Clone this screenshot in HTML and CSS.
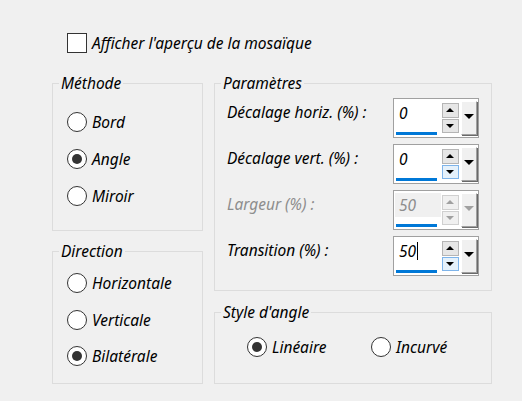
FILE: index.html
```html
<!DOCTYPE html>
<html lang="fr">
<head>
<meta charset="utf-8">
<title>Mosaïque</title>
<link rel="stylesheet" href="styles.css">
</head>
<body>
<div class="dialog">
  <div class="check-row"><span class="checkbox"></span><span>Afficher l'aperçu de la mosaïque</span></div>
  <div class="columns">
    <div class="col-left">
      <fieldset class="group methode">
        <legend>Méthode</legend>
        <div class="radio-list">
          <div class="radio"><span class="circle"></span>Bord</div>
          <div class="radio"><span class="circle checked"></span>Angle</div>
          <div class="radio"><span class="circle"></span>Miroir</div>
        </div>
      </fieldset>
      <fieldset class="group direction">
        <legend>Direction</legend>
        <div class="radio-list">
          <div class="radio"><span class="circle"></span>Horizontale</div>
          <div class="radio"><span class="circle"></span>Verticale</div>
          <div class="radio"><span class="circle checked"></span>Bilatérale</div>
        </div>
      </fieldset>
    </div>
    <div class="col-right">
      <fieldset class="group params">
        <legend>Paramètres</legend>
        <div class="param-list">
          <div class="param-row">
            <span class="plabel">Décalage horiz. (%) :</span>
            <div class="spin">
              <div class="field"><span class="val">0</span><span class="bar"></span></div>
              <div class="updown"><span class="ud up"></span><span class="ud down"></span></div>
              <span class="drop"></span>
            </div>
          </div>
          <div class="param-row">
            <span class="plabel">Décalage vert. (%) :</span>
            <div class="spin">
              <div class="field"><span class="val">0</span><span class="bar"></span></div>
              <div class="updown"><span class="ud up"></span><span class="ud down hot"></span></div>
              <span class="drop"></span>
            </div>
          </div>
          <div class="param-row disabled">
            <span class="plabel">Largeur (%) :</span>
            <div class="spin">
              <div class="field"><span class="val">50</span><span class="bar"></span></div>
              <div class="updown"><span class="ud up"></span><span class="ud down"></span></div>
              <span class="drop"></span>
            </div>
          </div>
          <div class="param-row">
            <span class="plabel">Transition (%) :</span>
            <div class="spin">
              <div class="field"><span class="val">50<span class="caret"></span></span><span class="bar"></span></div>
              <div class="updown"><span class="ud up"></span><span class="ud down hot"></span></div>
              <span class="drop"></span>
            </div>
          </div>
        </div>
      </fieldset>
      <fieldset class="group style">
        <legend>Style d'angle</legend>
        <div class="radio-row">
          <div class="radio first"><span class="circle checked"></span>Linéaire</div>
          <div class="radio"><span class="circle"></span>Incurvé</div>
        </div>
      </fieldset>
    </div>
  </div>
</div>
</body>
</html>
```

FILE: styles.css
```css
html, body {
  margin: 0;
  background: #f0f0f0;
}
body {
  font-family: "Noto Sans", "Open Sans", sans-serif;
  font-style: italic;
  font-size: 15.5px;
  color: #000;
}
.dialog {
  width: 522px;
  height: 401px;
  box-sizing: border-box;
  padding: 33px 0 0 52px;
}
.check-row {
  display: flex;
  align-items: center;
  gap: 5px;
  height: 20px;
  margin-left: 15px;
}
.checkbox {
  width: 20px;
  height: 20px;
  box-sizing: border-box;
  border: 1px solid #333;
  background: #fff;
}
.columns {
  display: flex;
  gap: 11px;
  margin-top: 20px;
}
.col-left {
  width: 151px;
  display: flex;
  flex-direction: column;
  gap: 10px;
}
.col-right {
  width: 278px;
  display: flex;
  flex-direction: column;
  gap: 11px;
}
.group {
  margin: 0;
  padding: 0;
  min-width: 0;
  border: 1px solid #dcdcdc;
}
.group legend {
  margin-left: 6px;
  padding: 0 2px;
  line-height: 20px;
}
.radio-list {
  display: flex;
  flex-direction: column;
}
.methode .radio-list {
  padding: 19px 0 24px 14px;
  gap: 17px;
}
.direction .radio-list {
  padding: 12px 0 17px 14px;
  gap: 16.5px;
}
.radio {
  display: flex;
  align-items: center;
  gap: 5px;
  height: 20px;
}
.circle {
  width: 20px;
  height: 20px;
  box-sizing: border-box;
  border-radius: 50%;
  border: 1px solid #333;
  background: #fff;
  display: flex;
  align-items: center;
  justify-content: center;
}
.circle.checked::after {
  content: "";
  width: 10px;
  height: 10px;
  border-radius: 50%;
  background: #333;
}
.param-list {
  display: flex;
  flex-direction: column;
  gap: 6px;
  padding: 5px 0 14px 12px;
}
.param-row {
  display: flex;
  align-items: flex-start;
}
.plabel {
  width: 166px;
  padding-top: 4px;
  line-height: 20px;
}
.disabled .plabel,
.disabled .val {
  color: #8d8d8d;
}
.spin {
  width: 86px;
  height: 40px;
  box-sizing: border-box;
  border: 1px solid #a0a0a0;
  background: #fff;
  display: flex;
  padding: 1px;
}
.field {
  width: 48px;
  display: flex;
  flex-direction: column;
  justify-content: flex-end;
}
.val {
  display: flex;
  align-items: center;
  height: 24px;
  padding-left: 4px;
  margin-bottom: 7px;
  line-height: 20px;
}
.disabled .val {
  background: #f0f0f0;
}
.caret {
  width: 1px;
  height: 18px;
  background: #000;
  margin-left: 1px;
}
.bar {
  width: 41px;
  height: 3px;
  margin-left: 1px;
  margin-bottom: 1px;
  background: #0078d7;
}
.updown {
  display: flex;
  flex-direction: column;
  width: 17px;
  margin: 3px 0 3px 1px;
}
.ud {
  flex: 1;
  box-sizing: border-box;
  border: 1px solid #b5b5b5;
  background: #e6e6e6;
  display: flex;
  align-items: center;
  justify-content: center;
}
.ud + .ud {
  margin-top: 1px;
}
.ud.hot {
  background: #e5f1fb;
  border-color: #7eb4ea;
}
.ud.up::after {
  content: "";
  border-left: 4px solid transparent;
  border-right: 4px solid transparent;
  border-bottom: 4px solid #000;
}
.ud.down::after {
  content: "";
  border-left: 4px solid transparent;
  border-right: 4px solid transparent;
  border-top: 4px solid #000;
}
.disabled .ud {
  background: #f0f0f0;
  border-color: #d0d0d0;
}
.disabled .ud.up::after {
  border-bottom-color: #a0a0a0;
}
.disabled .ud.down::after {
  border-top-color: #a0a0a0;
}
.drop {
  width: 17px;
  margin: 1px 0 1px 2px;
  box-sizing: border-box;
  background: #f0f0f0;
  border-top: 1px solid #fff;
  border-left: 1px solid #fff;
  border-right: 1px solid #a0a0a0;
  border-bottom: 1px solid #a0a0a0;
  box-shadow: 1px 1px 0 #696969;
  display: flex;
  justify-content: center;
  padding-top: 12px;
}
.drop::after {
  content: "";
  border-left: 5px solid transparent;
  border-right: 5px solid transparent;
  border-top: 5px solid #000;
  height: 0;
}
.disabled .drop::after {
  border-top-color: #a0a0a0;
}
.radio-row {
  display: flex;
  padding: 15px 0 26px 32px;
}
.radio.first {
  width: 124px;
}
```
